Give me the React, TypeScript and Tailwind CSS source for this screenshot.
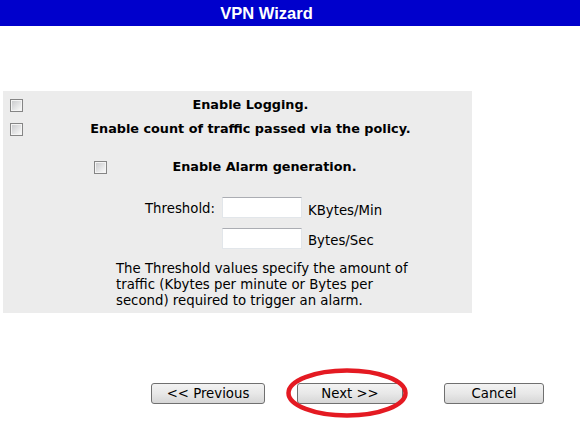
import React from "react";

function Check() {
  return (
    <div className="w-[13px] h-[13px] shrink-0 border border-[#858585] bg-[#f4f4f4] p-px">
      <div className="w-full h-full bg-gradient-to-br from-[#cbccce] to-[#f8f8f8]" />
    </div>
  );
}

function Field() {
  return (
    <div className="w-[80px] h-[21px] shrink-0 bg-white border border-[#e2e6ea] border-t-[#abadb3]" />
  );
}

function Btn({ label, w }: { label: string; w: string }) {
  return (
    <div
      className={`${w} h-[21px] border border-[#707070] rounded-[3px] bg-gradient-to-b from-[#f3f3f3] via-[#e8e8e8] to-[#d6d6d6] flex items-center justify-center text-[13.3px] text-black`}
    >
      {label}
    </div>
  );
}

export default function App() {
  return (
    <div
      className="w-[580px] h-[432px] bg-white relative overflow-hidden"
      style={{ fontFamily: '"DejaVu Sans", Verdana, sans-serif' }}
    >
      <div className="h-[26px] bg-[#0000cc] flex items-center justify-center pr-[47px]">
        <span
          className="text-white font-bold text-[16.5px] leading-none"
          style={{ fontFamily: '"Liberation Sans", Arial, sans-serif' }}
        >
          VPN Wizard
        </span>
      </div>

      <div className="mt-[65px] ml-[3px] w-[469px] h-[222px] bg-[#ececec] pt-[6px] text-[13.3px] text-black">
        <div className="flex items-center h-[16px]">
          <div className="pl-[7px] pr-[6px]">
            <Check />
          </div>
          <div className="flex-1 text-center font-bold text-[12.8px] leading-[16px]">Enable Logging.</div>
        </div>
        <div className="flex items-center h-[16px] mt-[8px]">
          <div className="pl-[7px] pr-[6px]">
            <Check />
          </div>
          <div className="flex-1 text-center font-bold text-[12.8px] leading-[16px]">
            Enable count of traffic passed via the policy.
          </div>
        </div>
        <div className="flex items-center h-[16px] mt-[22px] pl-[91px] pr-[50px]">
          <Check />
          <div className="flex-1 text-center font-bold text-[12.8px] leading-[16px]">Enable Alarm generation.</div>
        </div>

        <div className="flex items-start mt-[22px]">
          <div className="w-[212px] text-right leading-[16px] mt-[4px]">Threshold:</div>
          <div className="ml-[7px]">
            <Field />
          </div>
          <div className="ml-[6px] leading-[16px] mt-[6px]">KBytes/Min</div>
        </div>
        <div className="flex items-start mt-[9px] pl-[219px]">
          <Field />
          <div className="ml-[6px] leading-[16px] mt-[5px]">Bytes/Sec</div>
        </div>

        <div className="mt-[12px] ml-[113px] leading-[16px] whitespace-nowrap">
          The Threshold values specify the amount of
          <br />
          traffic (Kbytes per minute or Bytes per
          <br />
          second) required to trigger an alarm.
        </div>
      </div>

      <div className="mt-[70px] ml-[151px] flex">
        <Btn label="<< Previous" w="w-[114px]" />
        <div className="ml-[32px] relative">
          <Btn label="Next >>" w="w-[106px]" />
          <svg
            className="absolute left-[-11px] top-[-15px] pointer-events-none"
            width="122"
            height="50"
            viewBox="0 0 122 50"
          >
            <ellipse cx="61" cy="25" rx="58.5" ry="22.5" fill="none" stroke="#e41a22" strokeWidth="4.5" />
          </svg>
        </div>
        <div className="ml-[41px]">
          <Btn label="Cancel" w="w-[100px]" />
        </div>
      </div>
    </div>
  );
}
